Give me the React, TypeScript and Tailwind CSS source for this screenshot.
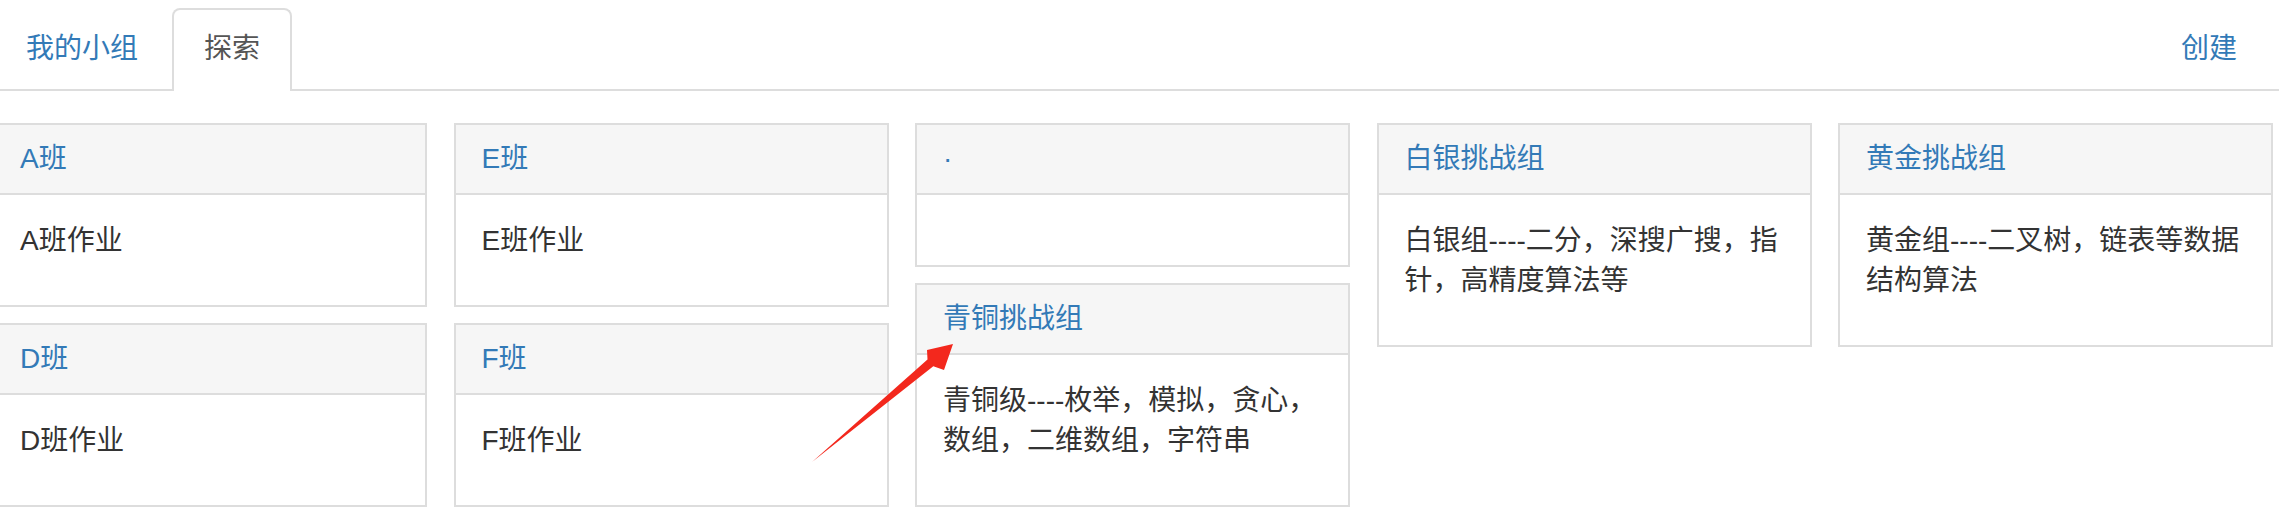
const columns = [
  [
    { title: 'A班', body: ['A班作业'] },
    { title: 'D班', body: ['D班作业'] },
  ],
  [
    { title: 'E班', body: ['E班作业'] },
    { title: 'F班', body: ['F班作业'] },
  ],
  [
    { title: '·', body: [] },
    { title: '青铜挑战组', body: ['青铜级----枚举，模拟，贪心，数组，二维数组，字符串'] },
  ],
  [{ title: '白银挑战组', body: ['白银组----二分，深搜广搜，指针，高精度算法等'] }],
  [{ title: '黄金挑战组', body: ['黄金组----二叉树，链表等数据结构算法'] }],
];

function Panel({ title, body }: { title: string; body: string[] }) {
  return (
    <div className="border-2 border-[#ddd] bg-white">
      <div className="h-[70px] px-[26px] flex items-center bg-[#f6f6f6] border-b-2 border-[#ddd]">
        <a href="#" className="text-[#337ab7]">
          {title}
        </a>
      </div>
      <div className="px-[26px] pt-[26px] pb-[44px] leading-[40px] text-[#333]">
        {body.map((t) => (
          <p key={t}>{t}</p>
        ))}
      </div>
    </div>
  );
}

export default function App() {
  return (
    <div className="relative w-[2279px] h-[525px] overflow-hidden bg-white text-[28px] leading-[40px] font-['Liberation_Sans','Noto_Sans_CJK_SC',sans-serif]">
      {/* Tabs */}
      <div className="flex pt-[8px] border-b-2 border-[#ddd]">
        <ul className="flex -ml-[4px]">
          <li className="mr-[4px]">
            <a href="#" className="flex items-center h-[81px] px-[30px] text-[#337ab7]">
              我的小组
            </a>
          </li>
          <li className="-mb-[2px]">
            <a
              href="#"
              className="flex items-center h-[83px] px-[30px] pb-[4px] border-2 border-b-0 border-[#ddd] rounded-t-[8px] bg-white text-[#555]"
            >
              探索
            </a>
          </li>
        </ul>
        <a href="#" className="ml-auto mr-[42px] flex items-center h-[81px] text-[#337ab7]">
          创建
        </a>
      </div>

      {/* Groups */}
      <div className="mt-[32px] -ml-[8px] flex items-start gap-[26.5px]">
        {columns.map((col, i) => (
          <div key={i} className="w-[435px] shrink-0 flex flex-col gap-[16px]">
            {col.map((p) => (
              <Panel key={p.title} title={p.title} body={p.body} />
            ))}
          </div>
        ))}
      </div>

      {/* annotation arrow */}
      <svg
        className="absolute inset-0 pointer-events-none"
        width="2279"
        height="525"
        viewBox="0 0 2279 525"
      >
        <polygon
          points="812,462 927.5,359.5 927,350 953,344 944,370 933.3,366.3"
          fill="#f3281d"
        />
      </svg>
    </div>
  );
}
